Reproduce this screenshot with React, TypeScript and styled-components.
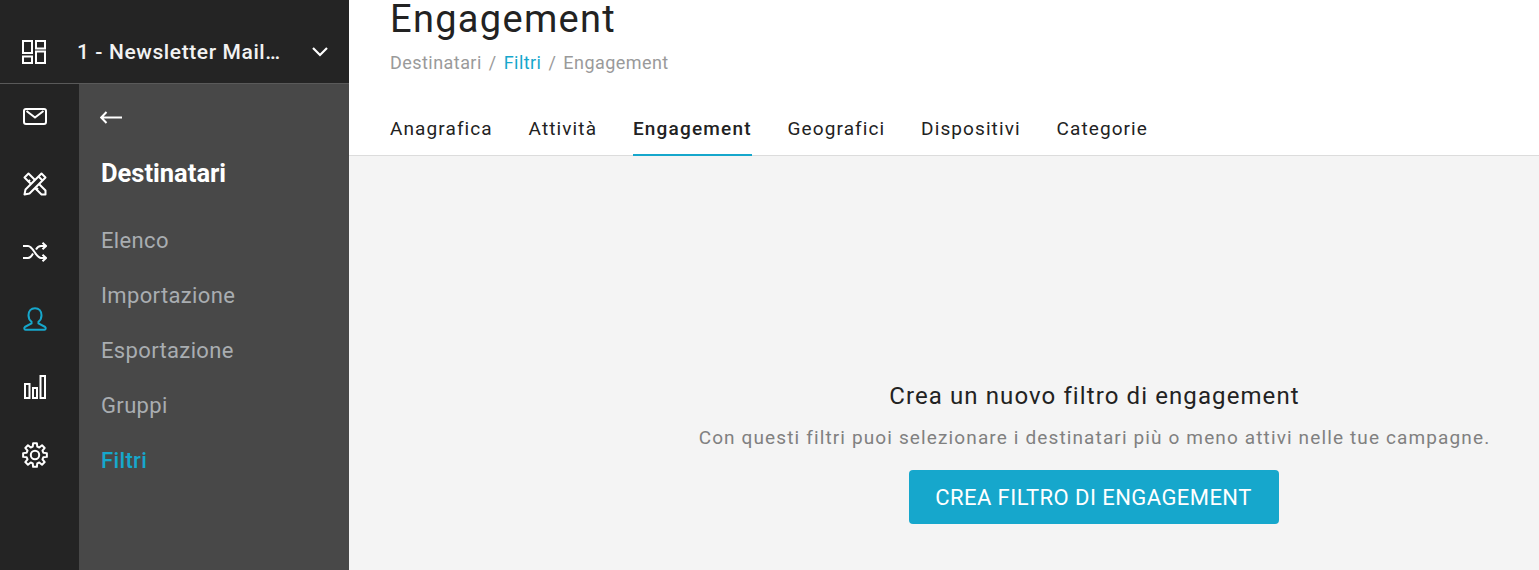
import React from "react";
import styled, { createGlobalStyle } from "styled-components";

const Global = createGlobalStyle`
  html, body { margin: 0; padding: 0; height: 100%; background: #fff; overflow: hidden; }
  #root { height: 100%; }
  * { box-sizing: border-box; }
  body { font-family: Roboto, "Liberation Sans", sans-serif; }
`;

const Page = styled.div`
  display: flex;
  width: 1539px;
  height: 570px;
  overflow: hidden;
`;
const Sidebar = styled.aside`
  width: 349px;
  flex: none;
  display: flex;
  flex-direction: column;
  background: #242424;
`;
const Header = styled.div`
  height: 84px;
  flex: none;
  display: flex;
  align-items: center;
  padding: 20px 18px 0 22px;
  border-bottom: 1px solid #5a5a5a;
  color: #fff;
`;
const HeaderTitle = styled.div`
  margin-left: 31px;
  width: 207px;
  font-size: 21px;
  font-weight: 500;
  letter-spacing: 0.6px;
  white-space: nowrap;
  overflow: hidden;
  text-overflow: ellipsis;
  color: #f2f2f2;
`;
const Chevron = styled.svg.attrs({ fill: "none", stroke: "currentColor", strokeWidth: 2.2 })`
  display: block;
  margin-left: 27px;
`;
const SideBody = styled.div`
  flex: 1;
  display: flex;
  min-height: 0;
`;
const Rail = styled.nav`
  width: 79px;
  flex: none;
  display: flex;
  flex-direction: column;
  align-items: center;
  gap: 3.8px;
  padding-right: 10px;
`;
const RailItem = styled.div<{ $active?: boolean }>`
  height: 64px;
  display: flex;
  align-items: center;
  color: ${(p) => (p.$active ? "#16a7cc" : "#fff")};
`;
const Panel = styled.div`
  flex: 1;
  background: #484848;
  padding: 19px 0 0 22px;
  display: flex;
  flex-direction: column;
`;
const Back = styled.div`
  height: 28px;
  margin-left: -1px;
  color: #fff;
  display: flex;
  align-items: center;
`;
const PanelTitle = styled.div`
  margin-top: 24px;
  font-size: 25.5px;
  font-weight: 700;
  line-height: 36px;
  color: #fff;
`;
const Menu = styled.div`
  display: flex;
  flex-direction: column;
  margin-top: 22px;
`;
const MenuItem = styled.div<{ $active?: boolean }>`
  height: 55px;
  line-height: 55px;
  font-size: 22px;
  letter-spacing: 0.35px;
  font-weight: ${(p) => (p.$active ? 500 : 400)};
  color: ${(p) => (p.$active ? "#16a7cc" : "#a9adb1")};
`;
const Main = styled.main`
  flex: 1;
  display: flex;
  flex-direction: column;
  min-width: 0;
`;
const Top = styled.div`
  height: 156px;
  flex: none;
  background: #fff;
  border-bottom: 1px solid #dcdcdc;
  padding: 0 0 0 41px;
  display: flex;
  flex-direction: column;
`;
const Title = styled.h1`
  margin: 0;
  font-size: 38px;
  font-weight: 400;
  line-height: 38px;
  letter-spacing: 1.3px;
  color: #222;
`;
const Crumbs = styled.div`
  margin-top: 14px;
  font-size: 18px;
  line-height: 22px;
  letter-spacing: 0.45px;
  color: #9a9a9a;
  display: flex;
  gap: 7px;
`;
const CrumbLink = styled.span`
  color: #16a7cc;
`;
const Tabs = styled.div`
  margin-top: auto;
  display: flex;
  gap: 35.8px;
`;
const Tab = styled.div<{ $active?: boolean }>`
  height: 46px;
  padding-top: 7px;
  font-size: 19px;
  line-height: 24px;
  letter-spacing: ${(p) => (p.$active ? "1.2px" : "1.1px")};
  font-weight: ${(p) => (p.$active ? 500 : 400)};
  color: #222;
  border-bottom: 2px solid ${(p) => (p.$active ? "#16a7cc" : "transparent")};
  margin-bottom: -1px;
`;
const Content = styled.section`
  flex: 1;
  background: #f4f4f4;
  display: flex;
  flex-direction: column;
  align-items: center;
  padding: 225px 48px 0 0;
  align-self: stretch;
`;
const Inner = styled.div`
  margin-left: 349px;
  display: flex;
  flex-direction: column;
  align-items: center;
`;
const EmptyTitle = styled.div`
  font-size: 24px;
  line-height: 30px;
  letter-spacing: 1.1px;
  color: #222;
`;
const EmptyText = styled.div`
  margin-top: 15px;
  font-size: 19px;
  line-height: 24px;
  letter-spacing: 1.13px;
  color: #808080;
  white-space: nowrap;
`;
const Button = styled.button`
  margin: 20px 2px 0 0;
  width: 370px;
  height: 54px;
  border: 0;
  border-radius: 4px;
  background: #16a7cc;
  color: #fff;
  font-family: inherit;
  font-size: 22px;
  letter-spacing: 0.44px;
  font-weight: 400;
`;

const Ic = styled.svg.attrs({ fill: "none", stroke: "currentColor", strokeWidth: 2 })`
  display: block;
`;

const tabs = ["Anagrafica", "Attività", "Engagement", "Geografici", "Dispositivi", "Categorie"];
const items = ["Elenco", "Importazione", "Esportazione", "Gruppi"];

function gearPath(cx: number, cy: number, outer: number, inner: number, teeth: number) {
  const pts: string[] = [];
  const step = (Math.PI * 2) / teeth;
  for (let i = 0; i < teeth; i++) {
    const a = i * step - Math.PI / 2;
    const seq: [number, number][] = [
      [inner, a - step * 0.34],
      [outer, a - step * 0.2],
      [outer, a + step * 0.2],
      [inner, a + step * 0.34],
    ];
    seq.forEach(([r, t]) => {
      pts.push(`${(cx + r * Math.cos(t)).toFixed(2)} ${(cy + r * Math.sin(t)).toFixed(2)}`);
    });
  }
  return `M${pts.join("L")}Z`;
}

export default function App() {
  return (
    <Page>
      <Global />
      <Sidebar>
        <Header>
          <Ic width="24" height="24" viewBox="0 0 24 24" strokeWidth={1.8}>
            <rect x="1" y="1" width="9" height="12" />
            <rect x="14" y="1" width="9" height="7.500" />
            <rect x="1" y="16.500" width="9" height="6.500" />
            <rect x="14" y="11.500" width="9" height="11.500" />
          </Ic>
          <HeaderTitle>1 - Newsletter Mailing list</HeaderTitle>
          <Chevron width="18" height="12" viewBox="0 0 18 12">
            <path d="M2 2l7 7 7-7" />
          </Chevron>
        </Header>
        <SideBody>
          <Rail>
            <RailItem>
              <Ic width="24" height="17" viewBox="0 0 24 17">
                <rect x="1" y="1" width="22" height="15" rx="2" />
                <path d="M3.500 3l8.500 6.500L20.500 3" />
              </Ic>
            </RailItem>
            <RailItem>
              <Ic width="24" height="24" viewBox="0 0 24 24" strokeWidth={1.9} strokeLinejoin="round">
                <path d="M1.500 5.500l4-4 17 17v4h-4z" />
                <path d="M5 10l2-2M9 14l2-2M13 18l2-2" />
                <path d="M18.500 1.500l4 4-16 16-5 1 1-5z" fill="#242424" />
                <path d="M15.500 4.500l4 4" />
              </Ic>
            </RailItem>
            <RailItem>
              <Ic width="24" height="20" viewBox="0 0 24 20">
                <path d="M0 4h5c5 0 8 12 13 12h5M0 16h5c2.500 0 4-2.500 5-4.500M13 7.500c1-1.800 3-3.500 5-3.500h5" />
                <path d="M19.500 .8l3.500 3.200-3.500 3.200M19.500 12.800l3.500 3.200-3.500 3.200" />
              </Ic>
            </RailItem>
            <RailItem $active>
              <Ic width="24" height="24" viewBox="0 0 24 24">
                <path d="M12 1.200c-4 0-6.500 3-6.500 7 0 3 1.300 5.200 3 6.500v1.800L1.800 20c-.7.400-.8 2.800.7 2.800h19c1.500 0 1.400-2.400.7-2.800l-6.700-3.500v-1.800c1.700-1.300 3-3.500 3-6.500 0-4-2.500-7-6.500-7z" />
              </Ic>
            </RailItem>
            <RailItem>
              <Ic width="22" height="24" viewBox="0 0 22 24">
                <rect x="1" y="9" width="4.500" height="14" />
                <rect x="9" y="13" width="4" height="10" />
                <rect x="16.500" y="1" width="4.500" height="22" />
              </Ic>
            </RailItem>
            <RailItem>
              <Ic width="26" height="26" viewBox="0 0 26 26" strokeWidth={2} strokeLinejoin="round">
                <circle cx="13" cy="13" r="4.200" />
                <path d={gearPath(13, 13, 12, 8.600, 8)} />
              </Ic>
            </RailItem>
          </Rail>
          <Panel>
            <Back>
              <Ic width="22" height="13" viewBox="0 0 22 13" strokeWidth={1.5}>
                <path d="M22 6.500H1.500M6.500 1L1.200 6.500 6.500 12" />
              </Ic>
            </Back>
            <PanelTitle>Destinatari</PanelTitle>
            <Menu>
              {items.map((i) => (
                <MenuItem key={i}>{i}</MenuItem>
              ))}
              <MenuItem $active>Filtri</MenuItem>
            </Menu>
          </Panel>
        </SideBody>
      </Sidebar>
      <Main>
        <Top>
          <Title>Engagement</Title>
          <Crumbs>
            <span>Destinatari</span>
            <span>/</span>
            <CrumbLink>Filtri</CrumbLink>
            <span>/</span>
            <span>Engagement</span>
          </Crumbs>
          <Tabs>
            {tabs.map((t) => (
              <Tab key={t} $active={t === "Engagement"}>
                {t}
              </Tab>
            ))}
          </Tabs>
        </Top>
        <Content>
          <Inner>
            <EmptyTitle>Crea un nuovo filtro di engagement</EmptyTitle>
            <EmptyText>Con questi filtri puoi selezionare i destinatari più o meno attivi nelle tue campagne.</EmptyText>
            <Button>CREA FILTRO DI ENGAGEMENT</Button>
          </Inner>
        </Content>
      </Main>
    </Page>
  );
}
